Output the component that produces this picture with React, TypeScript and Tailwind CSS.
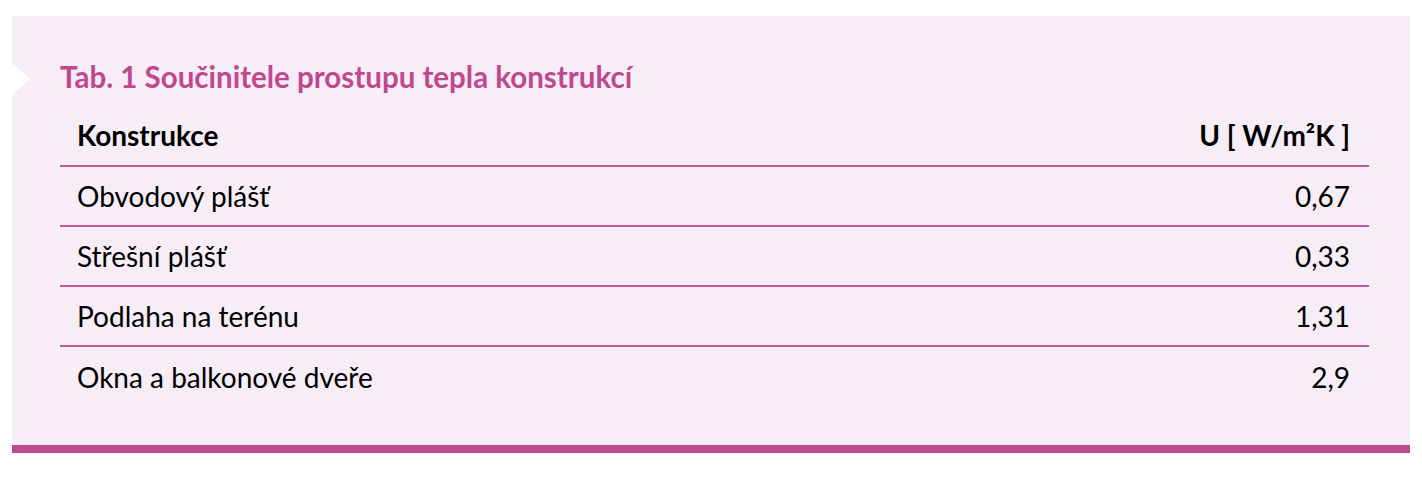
const rows = [
  { name: 'Obvodový plášť', value: '0,67' },
  { name: 'Střešní plášť', value: '0,33' },
  { name: 'Podlaha na terénu', value: '1,31' },
  { name: 'Okna a balkonové dveře', value: '2,9' },
]

export default function App() {
  return (
    <div className="h-[480px] w-[1422px] bg-white pt-4 px-3 font-['Lato','Liberation_Sans',sans-serif]">
      <div className="relative bg-[#f7edf6] pl-12 pr-[41px] pt-[42px] pb-[39px] border-b-[8px] border-[#bd4a8e]">
        <div className="absolute left-0 top-[47px] h-0 w-0 border-y-[16px] border-l-[18px] border-y-transparent border-l-white" />
        <h2 className="text-[29.5px] font-bold leading-[38px] text-[#c0488f]">Tab. 1 Součinitele prostupu tepla konstrukcí</h2>
        <table className="mt-[8px] w-full border-collapse text-black">
          <thead>
            <tr className="border-b-2 border-[#c9579b]">
              <th className="h-[62px] pl-[17px] text-left text-[28px] font-bold">Konstrukce</th>
              <th className="pr-[19px] text-right text-[28px] font-bold">U [ W/m²K ]</th>
            </tr>
          </thead>
          <tbody>
            {rows.map((row, i) => (
              <tr key={row.name} className={i < rows.length - 1 ? 'border-b-2 border-[#c9579b]' : ''}>
                <td className="h-[60px] pl-[17px] text-[28px]">{row.name}</td>
                <td className="pr-[19px] text-right text-[28px]">{row.value}</td>
              </tr>
            ))}
          </tbody>
        </table>
      </div>
    </div>
  )
}
